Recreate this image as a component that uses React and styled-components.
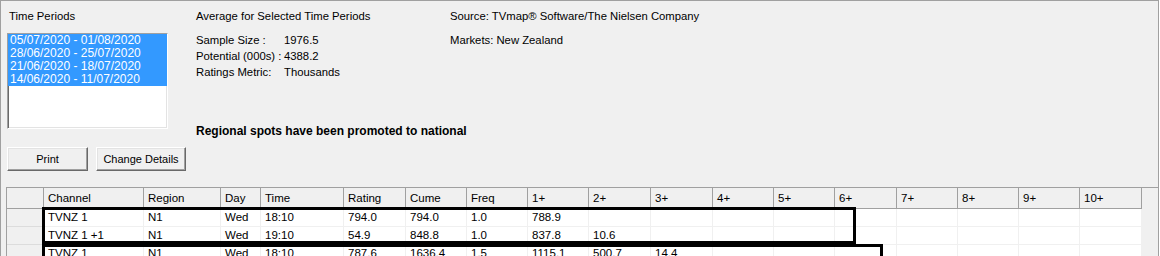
import React from 'react'
import styled, { createGlobalStyle } from 'styled-components'

const Global = createGlobalStyle`
  html, body {
    margin: 0;
    padding: 0;
    background: #ffffff;
    overflow: hidden;
  }
`

const Frame = styled.div`
  box-sizing: border-box;
  width: 1159px;
  height: 280px;
  padding: 8px 0 0 5px;
  background: #f0f0f0;
  border-top: 1px solid #a0a0a0;
  border-left: 1px solid #a0a0a0;
  border-right: 1px solid #a0a0a0;
  font-family: 'Liberation Sans', Arial, sans-serif;
  font-size: 11.3px;
  color: #000;
`

const TopArea = styled.div`
  display: flex;
  align-items: flex-start;
  padding-left: 1px;
`

const PeriodsCol = styled.div`
  width: 161px;
  display: flex;
  flex-direction: column;
`

const SummaryCol = styled.div`
  width: 254px;
  margin-left: 28px;
  display: flex;
  flex-direction: column;
`

const SourceCol = styled.div`
  display: flex;
  flex-direction: column;
  gap: 10px;
`

const Label = styled.div`
  line-height: 14px;
  padding-left: ${p => p.indent || 0}px;
  white-space: nowrap;
`

const ListBox = styled.div`
  box-sizing: border-box;
  margin-top: 10px;
  height: 96px;
  background: #fff;
  border: 1px solid;
  border-color: #a0a0a0 #ffffff #ffffff #a0a0a0;
  box-shadow: inset 1px 1px 0 #696969, inset -1px -1px 0 #e3e3e3;
  padding: 0;
  font-size: 12px;
`

const ListItem = styled.div`
  height: 13px;
  line-height: 13px;
  padding-left: 2px;
  background: ${p => (p.selected ? '#3399ff' : 'transparent')};
  color: ${p => (p.selected ? '#fff' : '#000')};
  white-space: nowrap;
`

const Stats = styled.div`
  margin-top: 9px;
  display: grid;
  grid-template-columns: 88px auto;
  line-height: 16px;
  white-space: nowrap;
`

const Notice = styled.div`
  margin-top: 44px;
  line-height: 14px;
  font-size: 12px;
  font-weight: 700;
  white-space: nowrap;
`

const ButtonRow = styled.div`
  display: flex;
  gap: 8px;
  margin-top: 9px;
  padding-left: 1px;
`

const Button = styled.button`
  box-sizing: border-box;
  width: ${p => p.w}px;
  height: 24px;
  padding: 0;
  background: #f0f0f0;
  border: 1px solid;
  border-color: #ffffff #696969 #696969 #ffffff;
  box-shadow: inset -1px -1px 0 #a0a0a0, inset 1px 1px 0 #e3e3e3;
  font-family: 'Liberation Sans', Arial, sans-serif;
  font-size: 11px;
  color: #000;
`

const Grid = styled.div`
  position: relative;
  box-sizing: border-box;
  margin-top: 16px;
  width: 1152px;
  height: 80px;
  background: #f0f0f0;
  border-top: 1px solid #a0a0a0;
  border-left: 1px solid #a0a0a0;
  font-size: 11.5px;
`

const Row = styled.div`
  display: flex;
`

const Cell = styled.div`
  box-sizing: border-box;
  flex: none;
  width: ${p => p.w}px;
  height: ${p => (p.header ? 21 : 18)}px;
  padding: ${p => (p.header ? '3px' : '1px')} 0 0 4px;
  line-height: 14px;
  white-space: nowrap;
  overflow: hidden;
  background: ${p => (p.header || p.stub ? '#f0f0f0' : '#ffffff')};
  border-right: 1px solid ${p => (p.header || p.stub ? '#a0a0a0' : '#f0f0f0')};
  border-bottom: 1px solid ${p => (p.header ? '#a0a0a0' : p.stub ? '#dcdcdc' : '#f0f0f0')};
`

const Outline = styled.div`
  position: absolute;
  box-sizing: border-box;
  left: 35px;
  top: ${p => p.top}px;
  width: ${p => p.w}px;
  height: ${p => p.h}px;
  border: 3px solid #000;
  pointer-events: none;
`

const widths = [37, 100, 77, 40, 83, 62, 61, 61, 61, 62, 62, 61, 61, 62, 61, 61, 61, 62]
const headers = ['', 'Channel', 'Region', 'Day', 'Time', 'Rating', 'Cume', 'Freq', '1+', '2+', '3+', '4+', '5+', '6+', '7+', '8+', '9+', '10+']

const rows = [
  ['TVNZ 1', 'N1', 'Wed', '18:10', '794.0', '794.0', '1.0', '788.9'],
  ['TVNZ 1 +1', 'N1', 'Wed', '19:10', '54.9', '848.8', '1.0', '837.8', '10.6'],
  ['TVNZ 1', 'N1', 'Wed', '18:10', '787.6', '1636.4', '1.5', '1115.1', '500.7', '14.4'],
]

const periods = [
  '05/07/2020 - 01/08/2020',
  '28/06/2020 - 25/07/2020',
  '21/06/2020 - 18/07/2020',
  '14/06/2020 - 11/07/2020',
]

const App = () => {
  return (
    <>
      <Global />
      <Frame>
        <TopArea>
          <PeriodsCol>
            <Label indent={2}>Time Periods</Label>
            <ListBox>
              {periods.map(p => (
                <ListItem key={p} selected>{p}</ListItem>
              ))}
            </ListBox>
          </PeriodsCol>
          <SummaryCol>
            <Label>Average for Selected Time Periods</Label>
            <Stats>
              <span>Sample Size :</span><span>1976.5</span>
              <span>Potential (000s) :</span><span>4388.2</span>
              <span>Ratings Metric:</span><span>Thousands</span>
            </Stats>
            <Notice>Regional spots have been promoted to national</Notice>
          </SummaryCol>
          <SourceCol>
            <Label>Source: TVmap® Software/The Nielsen Company</Label>
            <Label>Markets: New Zealand</Label>
          </SourceCol>
        </TopArea>

        <ButtonRow>
          <Button w={81}>Print</Button>
          <Button w={90}>Change Details</Button>
        </ButtonRow>

        <Grid>
          <Row>
            {headers.map((h, i) => (
              <Cell key={i} w={widths[i]} header>{h}</Cell>
            ))}
          </Row>
          {rows.map((r, ri) => (
            <Row key={ri}>
              {widths.map((w, i) => (
                <Cell key={i} w={w} stub={i === 0}>{i === 0 ? '' : r[i - 1] || ''}</Cell>
              ))}
            </Row>
          ))}
          <Outline top={19} w={814} h={37} />
          <Outline top={56} w={841} h={40} />
        </Grid>
      </Frame>
    </>
  )
}

export default App
